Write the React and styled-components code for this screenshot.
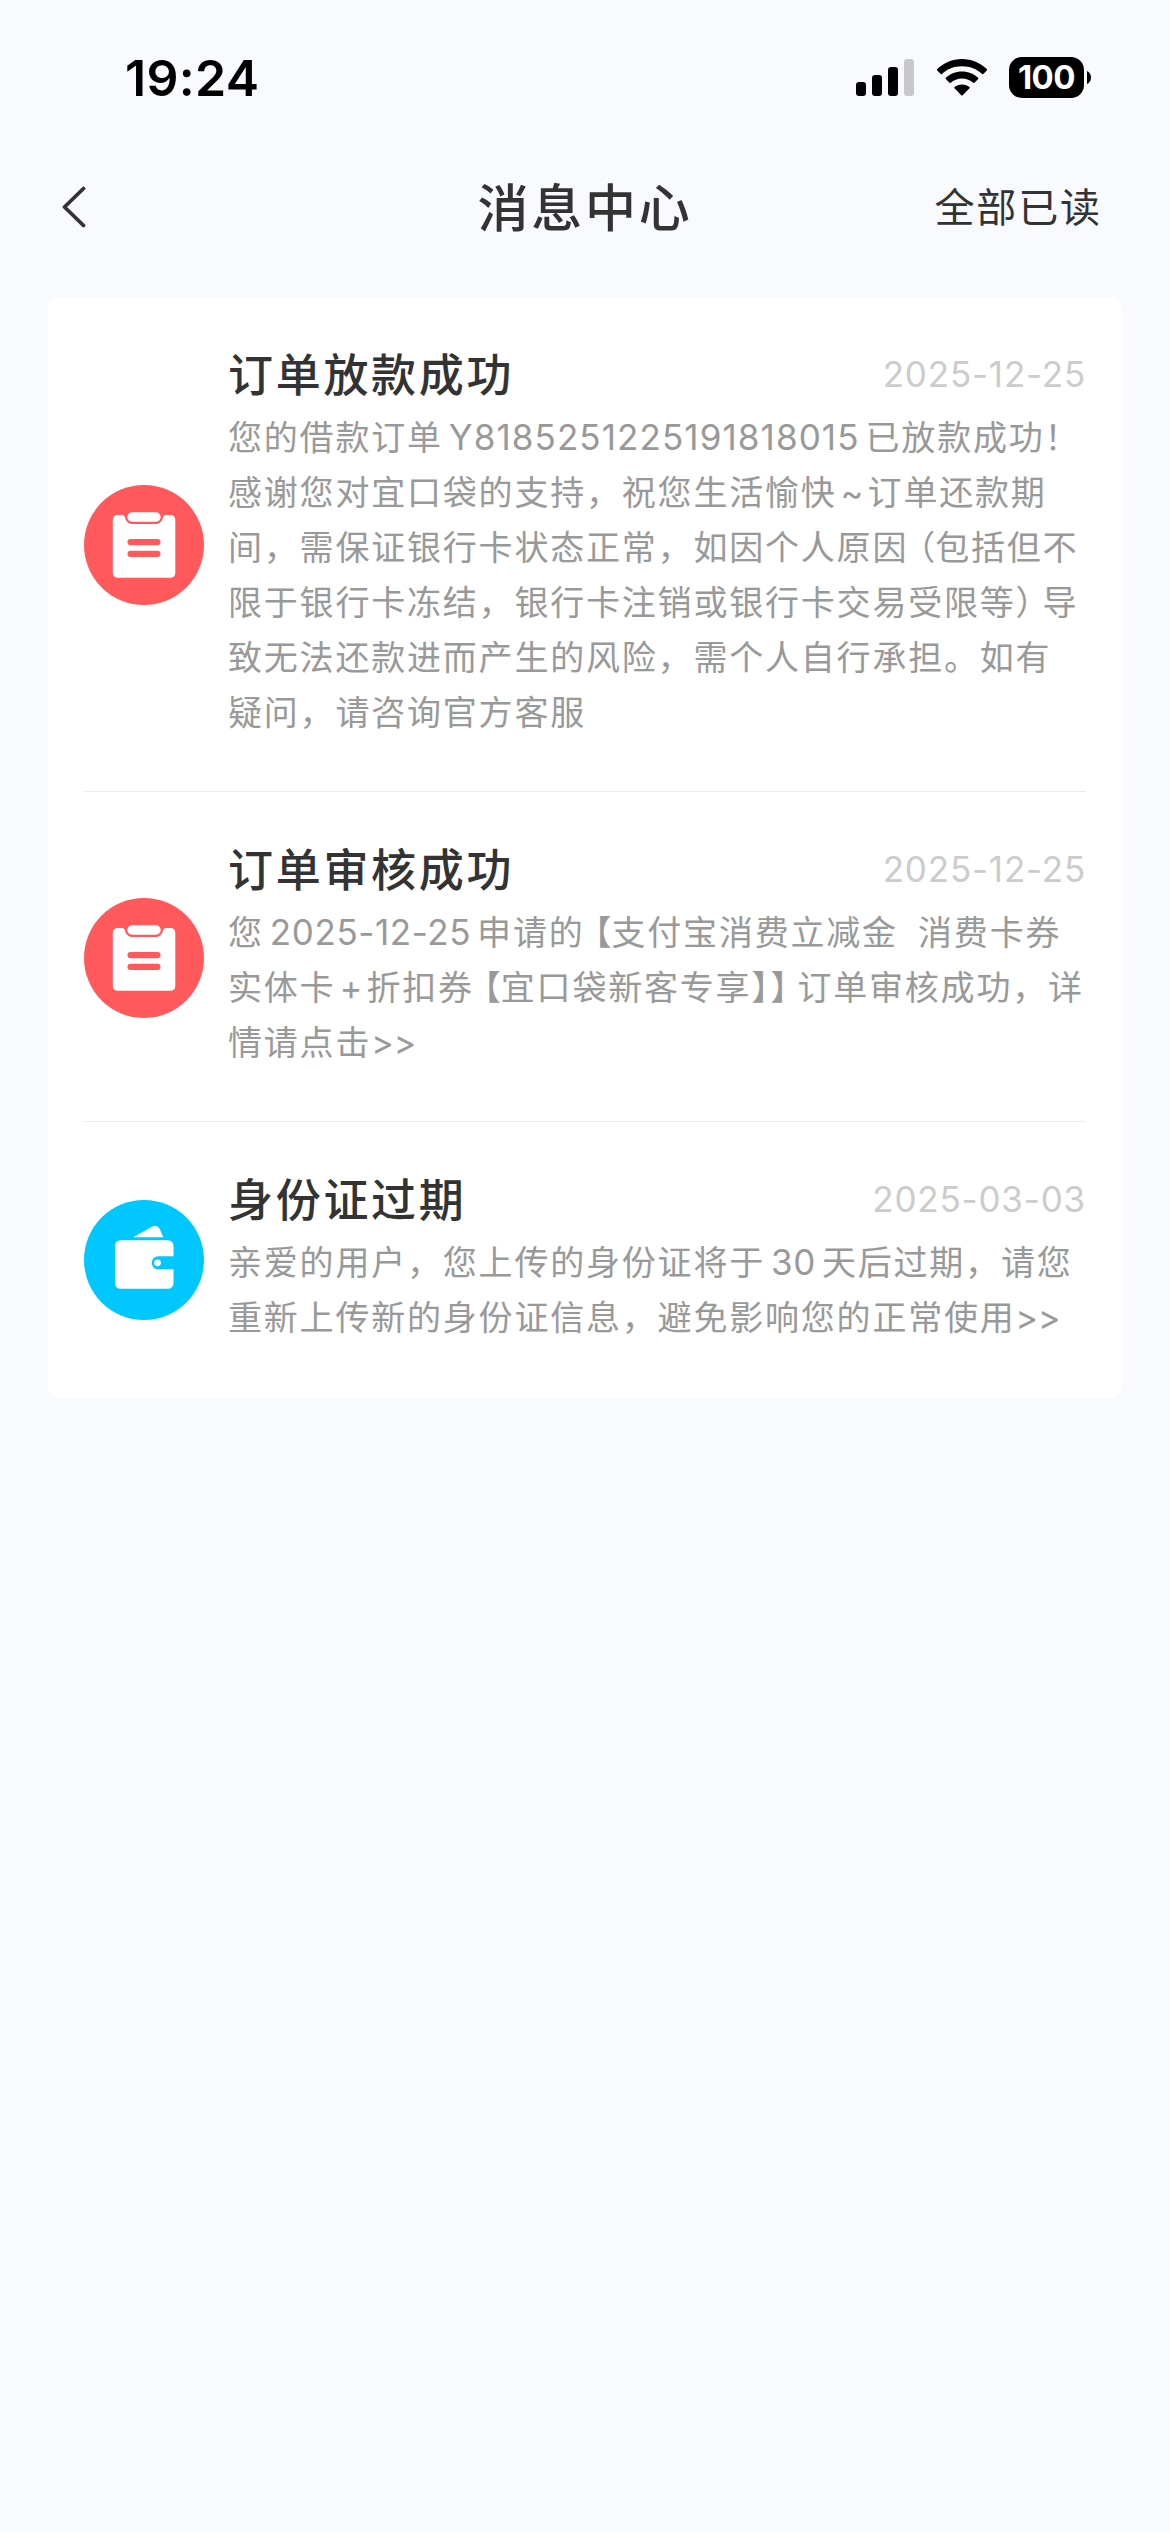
import React from 'react';
import styled, { createGlobalStyle } from 'styled-components';

const cjk = `"Noto Sans CJK SC", sans-serif`;

const messages = [
  {
    id: 1,
    icon: 'order',
    title: '订单放款成功',
    date: '2025-12-25',
    lines: [
      '您的借款订单Y8185251225191818015已放款成功！',
      '感谢您对宜口袋的支持，祝您生活愉快~订单还款期',
      '间，需保证银行卡状态正常，如因个人原因（包括但不',
      '限于银行卡冻结，银行卡注销或银行卡交易受限等）导',
      '致无法还款进而产生的风险，需个人自行承担。如有',
      '疑问，请咨询官方客服',
    ],
  },
  {
    id: 2,
    icon: 'order',
    title: '订单审核成功',
    date: '2025-12-25',
    lines: [
      '您2025-12-25申请的【支付宝消费立减金  消费卡券',
      '实体卡+折扣券【宜口袋新客专享】】订单审核成功，详',
      '情请点击>>',
    ],
  },
  {
    id: 3,
    icon: 'wallet',
    title: '身份证过期',
    date: '2025-03-03',
    lines: [
      '亲爱的用户，您上传的身份证将于30天后过期，请您',
      '重新上传新的身份证信息，避免影响您的正常使用>>',
    ],
  },
];

// splits a line in runs, so latin text and brackets get their own spacing
function renderLine(line) {
  const parts = line.split(/([A-Z0-9-]+|[+~]|>>|[（【]|[）】]|  )/).filter(Boolean);
  return parts.map((part, i) => {
    if (/^[A-Z0-9-]+$/.test(part)) return <Latin key={i} $long={part.length > 12}>{part}</Latin>;
    if (/^[+~]$/.test(part)) return <Sign key={i}>{part}</Sign>;
    if (part === '>>') return <Arrows key={i}>{part}</Arrows>;
    if (part === '  ') return <Gap key={i}>{part}</Gap>;
    if (/^[（【]$/.test(part)) return <Bracket key={i} $open>{part}</Bracket>;
    if (/^[）】]$/.test(part)) {
      return <Bracket key={i} $tight={parts[i + 1] === '】'}>{part}</Bracket>;
    }
    return part;
  });
}

function StatusBar() {
  return (
    <Status>
      <Time>19:24</Time>
      <StatusIcons>
        <svg width="58" height="38" viewBox="0 0 58 38">
          <rect x="0" y="23" width="10" height="14" rx="3" />
          <rect x="16" y="16" width="10" height="21" rx="3" />
          <rect x="32" y="8" width="10" height="29" rx="3" />
          <rect x="48" y="0" width="10" height="37" rx="3" fill="#c7c8cb" />
        </svg>
        <svg width="50" height="38" viewBox="0 0 50 38">
          <path d="M25 0C34.6 0 43.400 3.800 50 10.200Q50.300 10.800 49.800 11.400L46.300 15Q45.700 15.400 45.100 15C39.800 10 32.800 7.300 25 7.300S10.200 10 4.900 15Q4.300 15.400 3.700 15L.2 11.400Q-.3 10.800 0 10.200C6.600 3.800 15.400 0 25 0Z" />
          <path d="M25 12.500C31.300 12.500 37 14.900 41.300 18.900Q41.700 19.500 41.200 20.100L37.500 23.800Q36.900 24.200 36.300 23.800C33.300 21.100 29.300 19.500 25 19.500S16.700 21.100 13.700 23.800Q13.100 24.200 12.500 23.800L8.800 20.100Q8.300 19.500 8.700 18.900C13 14.900 18.700 12.500 25 12.500Z" />
          <path d="M25 25.500C27.900 25.500 30.500 26.500 32.500 28.100Q32.900 28.700 32.400 29.300L25.700 36.300Q25 36.900 24.300 36.300L17.600 29.300Q17.100 28.700 17.500 28.100C19.500 26.500 22.100 25.500 25 25.500Z" />
        </svg>
        <Battery>
          <Level>100</Level>
          <svg width="4" height="13" viewBox="0 0 4 13">
            <path d="M0 0C2.400 1 4 3.500 4 6.500S2.400 12 0 13Z" />
          </svg>
        </Battery>
      </StatusIcons>
    </Status>
  );
}

function OrderIcon() {
  return (
    <svg width="120" height="120" viewBox="0 0 120 120">
      <circle cx="60" cy="60" r="60" fill="#ff595c" />
      <path
        d="M34 30H38.500Q40.500 30 41 32.500C42 36.600 44.500 39 48.500 39H71.500C75.500 39 78 36.600 79 32.500Q79.500 30 81.500 30H86Q91.300 30 91.300 35V87.700Q91.300 92.700 86.300 92.700H34Q28.800 92.700 28.800 87.700V35Q28.800 30 34 30Z"
        fill="#fff"
      />
      <rect x="43.300" y="27.300" width="33.400" height="9.400" rx="4.700" fill="#fff" />
      <rect x="43.500" y="54" width="33" height="6.200" rx="3" fill="#ff595c" />
      <rect x="43.500" y="65.700" width="33" height="6.200" rx="3" fill="#ff595c" />
    </svg>
  );
}

function WalletIcon() {
  return (
    <svg width="120" height="120" viewBox="0 0 120 120">
      <circle cx="60" cy="60" r="60" fill="#00c8ff" />
      <path d="M49.300 37.300L67.500 27Q73 24.300 76 29.500L79.300 37.300Z" fill="#fff" />
      <path
        d="M37 40.300H83.500Q89.500 40.300 89.500 46.300V56.300H74.200A6.500 6.500 0 0 0 74.200 69.300H89.500V82.700Q89.500 88.700 83.500 88.700H37Q31 88.700 31 82.700V46.300Q31 40.300 37 40.300Z"
        fill="#fff"
      />
      <circle cx="73.500" cy="62.800" r="3.400" fill="#fff" />
    </svg>
  );
}

function Message({ icon, title, date, lines }) {
  return (
    <Row>
      <IconBox>{icon === 'wallet' ? <WalletIcon /> : <OrderIcon />}</IconBox>
      <Content>
        <Heading>
          <Title>{title}</Title>
          <DateText>{date}</DateText>
        </Heading>
        {lines.map((line) => (
          <Line key={line}>{renderLine(line)}</Line>
        ))}
      </Content>
    </Row>
  );
}

function App() {
  return (
    <Page>
      <GlobalStyle />
      <StatusBar />
      <NavBar>
        <BackButton aria-label="返回">
          <svg width="24" height="42" viewBox="0 0 24 42">
            <path d="M21.500 2.500L2.500 21L21.500 39.500" fill="none" stroke="#333" strokeWidth="3.800" strokeLinecap="round" strokeLinejoin="round" />
          </svg>
        </BackButton>
        <PageTitle>消息中心</PageTitle>
        <ReadAll>全部已读</ReadAll>
      </NavBar>
      <Card>
        {messages.map((message) => (
          <Message key={message.id} {...message} />
        ))}
      </Card>
    </Page>
  );
}

const GlobalStyle = createGlobalStyle`
* {
  box-sizing: border-box;
}
body {
  margin: 0;
  background-color: #f9fafe;
  font-family: ${cjk};
  text-autospace: no-autospace;
  text-spacing-trim: space-all;
}
svg {
  display: block;
}
`;

const Page = styled.div`
width: 1170px;
min-height: 2532px;
background-color: #f9fafe;
`;

const Status = styled.header`
height: 141px;
padding: 57px 79px 0 125px;
display: flex;
justify-content: space-between;
align-items: flex-start;
`;

const Time = styled.span`
font: 600 50px/42px Inter, sans-serif;
letter-spacing: 0.3px;
color: #000;
`;

const StatusIcons = styled.div`
display: flex;
align-items: center;
gap: 22.5px;
`;

const Battery = styled.div`
display: flex;
align-items: center;
gap: 3px;
`;

const Level = styled.span`
width: 75px;
height: 41px;
border-radius: 13px;
background-color: #000;
color: #fff;
font: 700 33px/41px Inter, sans-serif;
letter-spacing: -0.5px;
text-align: center;
`;

const NavBar = styled.nav`
height: 132px;
padding: 0 62px;
display: grid;
grid-template-columns: 1fr auto 1fr;
align-items: center;
color: #333;
`;

const BackButton = styled.button`
border: 0;
padding: 0;
background: none;
justify-self: start;
`;

const PageTitle = styled.h1`
margin: 0;
padding-bottom: 5px;
font-size: 51px;
font-weight: 500;
letter-spacing: 2.8px;
`;

const ReadAll = styled.span`
justify-self: end;
margin-right: 6px;
padding-bottom: 4px;
font-size: 40px;
letter-spacing: 1.9px;
`;

const Card = styled.main`
margin: 24px 48px 0;
padding: 0 36px;
border-radius: 12px;
background-color: #fff;
`;

const Row = styled.article`
display: flex;
align-items: center;
padding: 50px 0 48px;
border-bottom: 1px solid #ebebeb;
&:last-child {
  padding-bottom: 50px;
  border-bottom: 0;
}
`;

const IconBox = styled.div`
flex: none;
margin-right: 24px;
`;

const Content = styled.div`
flex: 1;
min-width: 0;
padding-bottom: 5px;
`;

const Heading = styled.div`
display: flex;
justify-content: space-between;
align-items: center;
height: 51px;
margin-bottom: 10px;
`;

const Title = styled.h2`
margin: 0;
font-size: 45px;
font-weight: 500;
line-height: 51px;
letter-spacing: 2.7px;
color: #333;
`;

const DateText = styled.time`
margin-top: 4px;
font: 400 35px/47px Inter, sans-serif;
letter-spacing: 0.8px;
color: #ccc;
`;

const Line = styled.p`
margin: 0;
height: 55px;
font-size: 34px;
line-height: 55px;
letter-spacing: 1.8px;
white-space: pre;
color: #999;
`;

const Latin = styled.span`
margin: 0 6px;
font-family: Inter, sans-serif;
font-size: 35px;
letter-spacing: ${({ $long }) => ($long ? 1.1 : 0.6)}px;
`;

const Sign = styled.span`
display: inline-block;
width: 31px;
font-family: Inter, sans-serif;
letter-spacing: 0;
text-align: center;
`;

const Arrows = styled.span`
font-family: Inter, sans-serif;
letter-spacing: 0;
`;

const Gap = styled.span`
font-family: Inter, sans-serif;
letter-spacing: 0.5px;
`;

// half-width bracket glyphs, pushed against the text they enclose
const Bracket = styled.span`
display: inline-flex;
justify-content: ${({ $open }) => ($open ? 'flex-end' : 'flex-start')};
width: ${({ $tight }) => ($tight ? 19 : 27)}px;
font-feature-settings: "halt";
letter-spacing: 0;
`;

export default App;
